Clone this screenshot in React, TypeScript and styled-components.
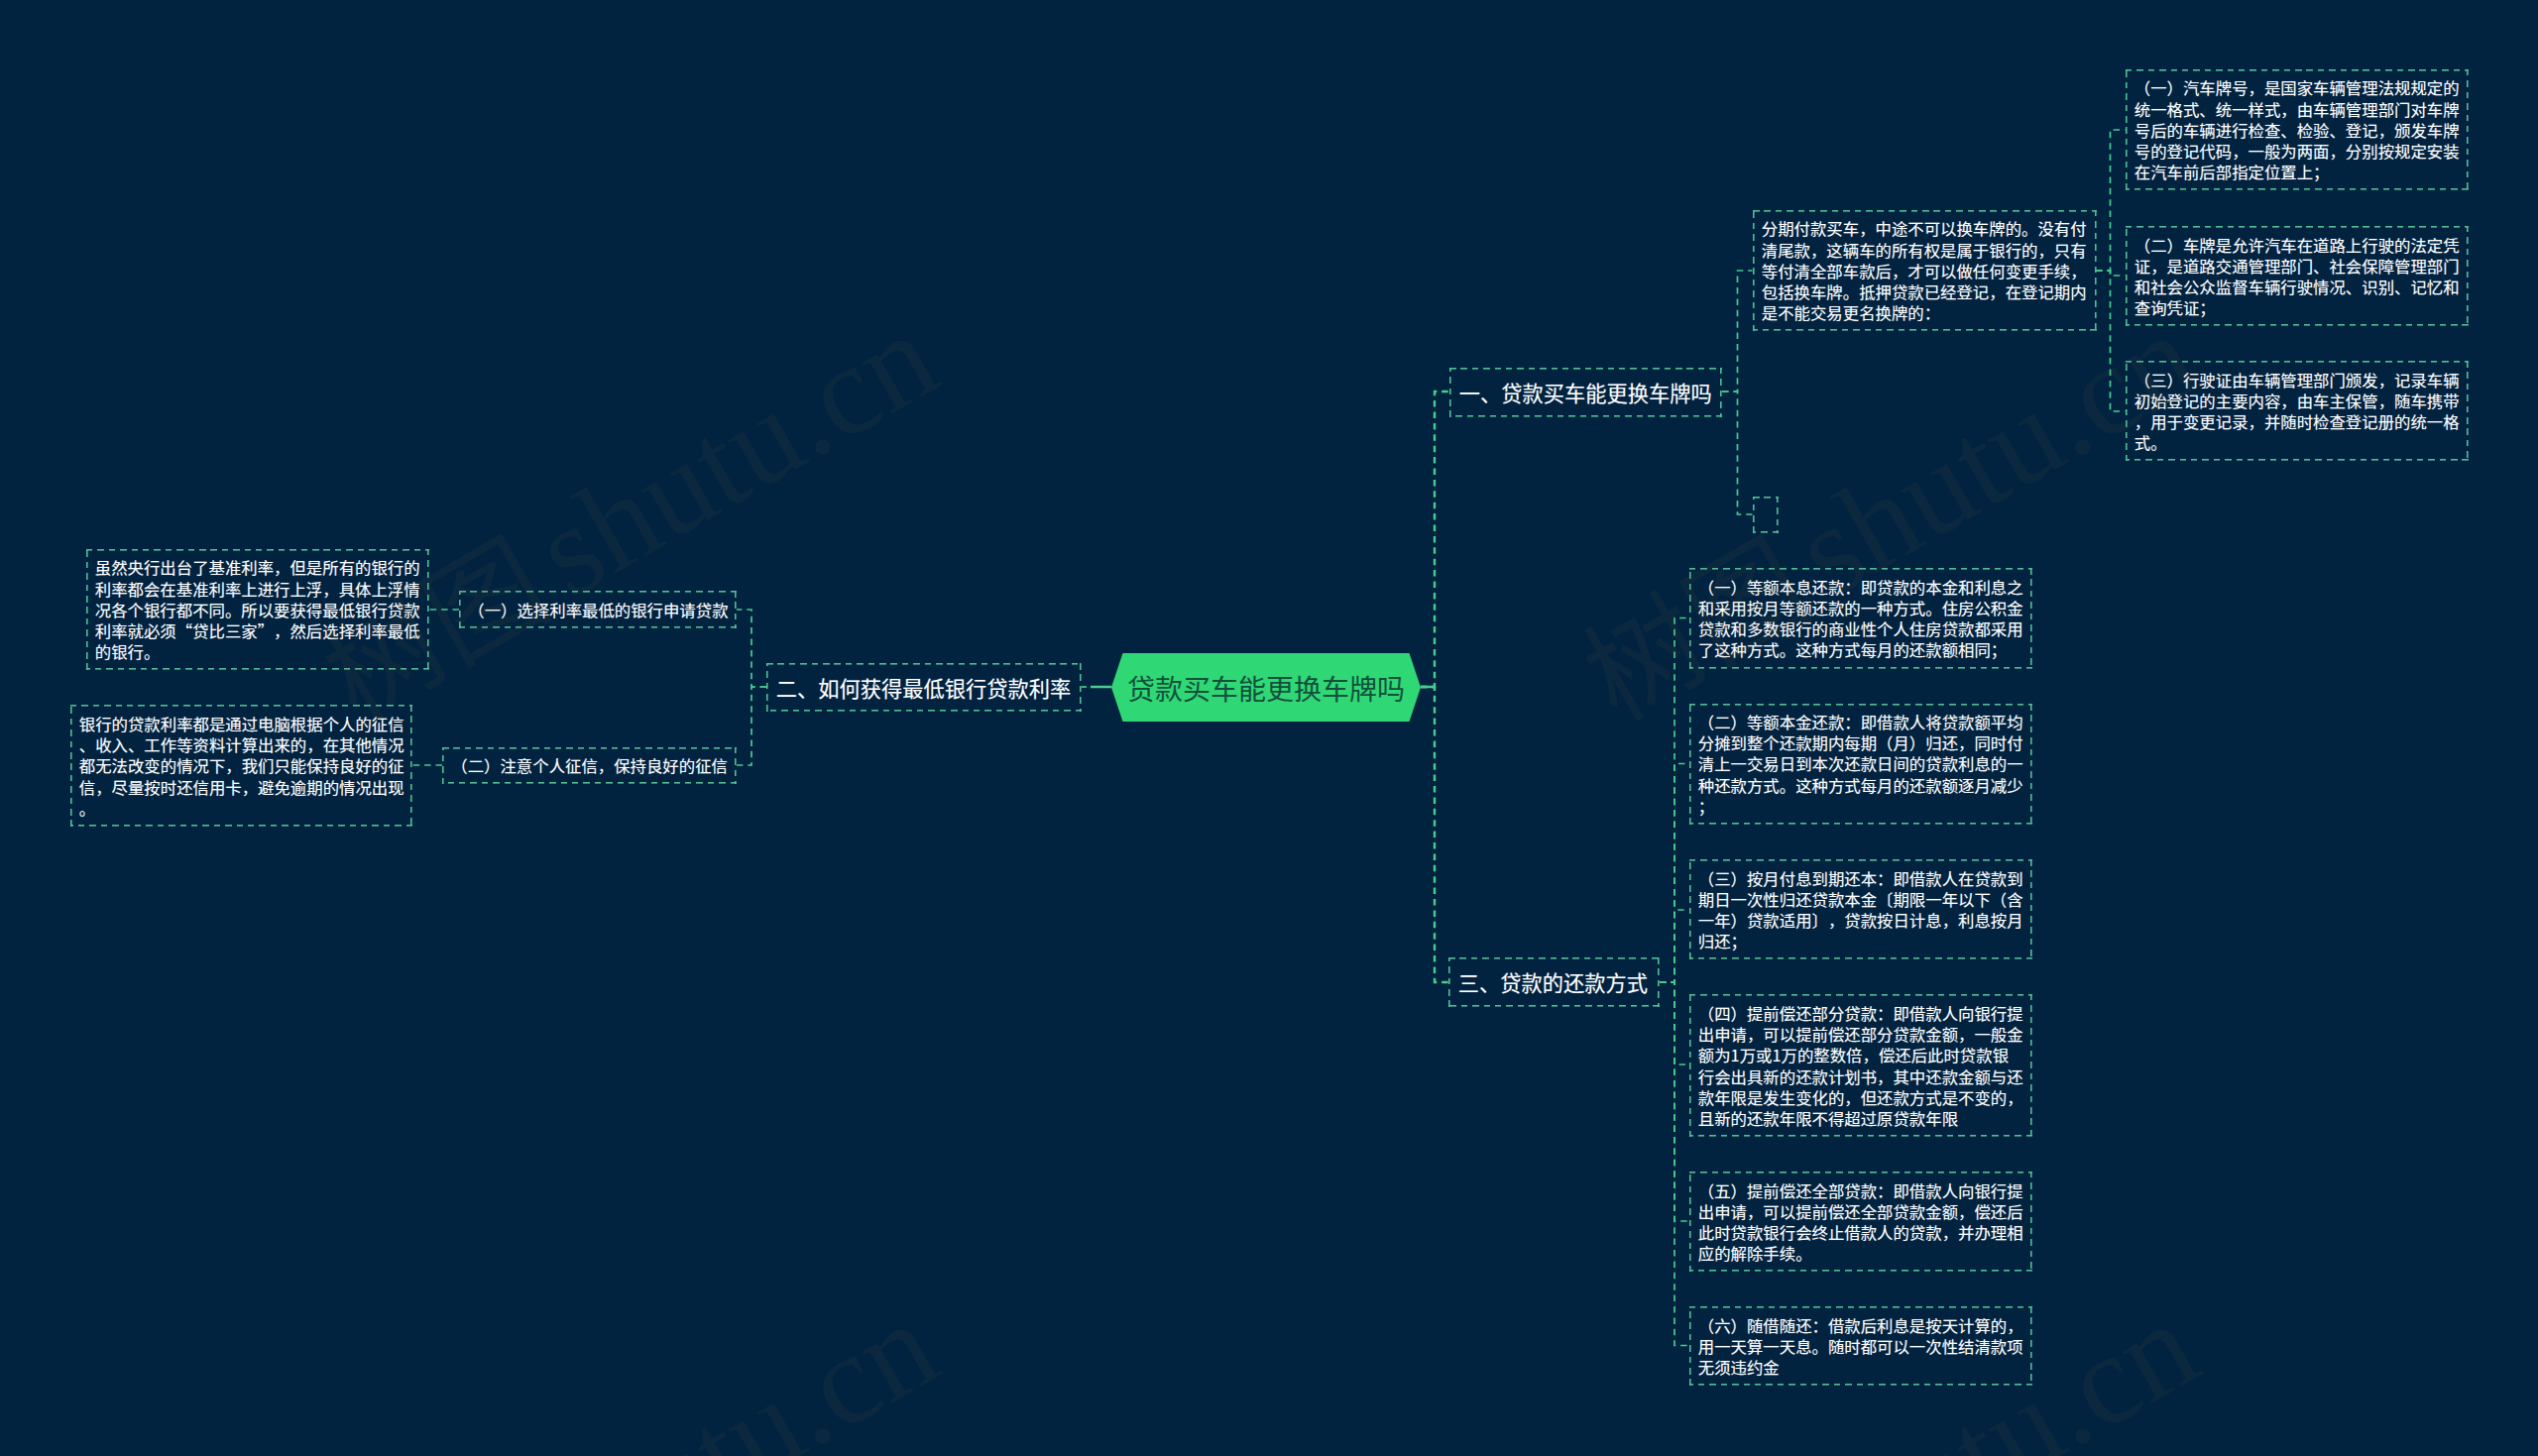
import React from 'react';
import styled, { createGlobalStyle } from 'styled-components';

const BORDER = '#52bd93';
const LINE = '#49cc8e';

const dash = (dir: string): string =>
  `repeating-linear-gradient(${dir}, ${BORDER} 0 6.5px, transparent 6.5px 11.4px)`;

const GlobalStyle = createGlobalStyle`
  html, body {
    margin: 0;
    padding: 0;
    background: #012340;
  }
`;

const Canvas = styled.div`
  position: relative;
  width: 2560px;
  height: 1469px;
  overflow: hidden;
  background: #012340;
  font-family: "Noto Sans CJK SC", "Noto Sans", sans-serif;
  color: #fff;
  text-spacing-trim: space-all;
`;

const Connectors = styled.svg`
  position: absolute;
  left: 0;
  top: 0;
`;

interface BoxProps {
  $x: number;
  $y: number;
  $w: number;
  $h: number;
}

const Root = styled.div<BoxProps>`
  position: absolute;
  left: ${p => p.$x}px;
  top: ${p => p.$y}px;
  width: ${p => p.$w}px;
  height: ${p => p.$h}px;
  display: flex;
  align-items: center;
  justify-content: center;
  background: #2fd875;
  clip-path: polygon(11.5px 0, calc(100% - 11.5px) 0, 100% 50%, calc(100% - 11.5px) 100%, 11.5px 100%, 0 50%);
  color: #11503c;
  font-size: 28px;
  line-height: 1;
  white-space: nowrap;
`;

const Node = styled.div<BoxProps & { $branch?: boolean }>`
  position: absolute;
  left: ${p => p.$x}px;
  top: ${p => p.$y}px;
  width: ${p => p.$w}px;
  height: ${p => p.$h}px;
  box-sizing: border-box;
  display: flex;
  align-items: center;
  padding: ${p => (p.$branch ? '0 9.8px' : '1px 9.3px 0')};
  font-size: ${p => (p.$branch ? 21.25 : 16.4)}px;
  line-height: 21.2px;
  white-space: pre;
  text-shadow: 0 0 1px rgba(255, 255, 255, 0.35);
  background:
    ${dash('90deg')} left top / 100% 1.6px no-repeat,
    ${dash('270deg')} left bottom / 100% 1.6px no-repeat,
    ${dash('180deg')} right top / 1.6px 100% no-repeat,
    ${dash('0deg')} left top / 1.6px 100% no-repeat;
`;

const Watermark = styled.span<{ $x: number; $y: number }>`
  position: absolute;
  left: ${p => p.$x}px;
  top: ${p => p.$y}px;
  font-family: "Liberation Serif", "Noto Sans CJK SC", serif;
  font-size: 130px;
  line-height: 1;
  word-spacing: -16px;
  white-space: pre;
  color: rgba(130, 110, 60, 0.085);
  transform: rotate(-30deg);
  transform-origin: 0 0;
  pointer-events: none;
`;

const WatermarkHan = styled.span`
  font-size: 116px;
`;

// x1 y1 -> bend x -> y2 -> x2
type Edge = [number, number, number, number, number];

const mainEdges: Edge[] = [
  [1433, 693, 1447, 395, 1462],
  [1433, 693, 1447, 991, 1461],
];

const edges: Edge[] = [
  [1737, 395, 1752.5, 273, 1767.5],
  [1737, 395, 1752.5, 519, 1767.5],
  [2114, 273, 2128.5, 131, 2143.5],
  [2114, 273, 2128.5, 278, 2143.5],
  [2114, 273, 2128.5, 415, 2143.5],
  [1674, 991, 1689, 623.5, 1703.5],
  [1674, 991, 1689, 770.5, 1703.5],
  [1674, 991, 1689, 918, 1703.5],
  [1674, 991, 1689, 1074, 1703.5],
  [1674, 991, 1689, 1232, 1703.5],
  [1674, 991, 1689, 1357.5, 1703.5],
  [773, 693, 758, 615, 743],
  [773, 693, 758, 772, 743],
  [463, 615, 448, 615, 432.5],
  [446, 772, 431, 772, 416],
];

interface MapNode {
  x: number;
  y: number;
  w: number;
  h: number;
  text: string;
  branch?: boolean;
}

const nodes: MapNode[] = [
  { x: 1462, y: 371, w: 275, h: 50, branch: true, text: '一、贷款买车能更换车牌吗' },
  { x: 773, y: 668.5, w: 318, h: 49.5, branch: true, text: '二、如何获得最低银行贷款利率' },
  { x: 1461, y: 966, w: 213, h: 50, branch: true, text: '三、贷款的还款方式' },
  {
    x: 1767.5, y: 212, w: 347, h: 122,
    text: '分期付款买车，中途不可以换车牌的。没有付\n清尾款，这辆车的所有权是属于银行的，只有\n等付清全部车款后，才可以做任何变更手续，\n包括换车牌。抵押贷款已经登记，在登记期内\n是不能交易更名换牌的：',
  },
  { x: 1767.5, y: 501, w: 26.5, h: 37, text: '' },
  {
    x: 2143.5, y: 70, w: 346, h: 122,
    text: '（一）汽车牌号，是国家车辆管理法规规定的\n统一格式、统一样式，由车辆管理部门对车牌\n号后的车辆进行检查、检验、登记，颁发车牌\n号的登记代码，一般为两面，分别按规定安装\n在汽车前后部指定位置上；',
  },
  {
    x: 2143.5, y: 228, w: 346, h: 101,
    text: '（二）车牌是允许汽车在道路上行驶的法定凭\n证，是道路交通管理部门、社会保障管理部门\n和社会公众监督车辆行驶情况、识别、记忆和\n查询凭证；',
  },
  {
    x: 2143.5, y: 364, w: 346, h: 101,
    text: '（三）行驶证由车辆管理部门颁发，记录车辆\n初始登记的主要内容，由车主保管，随车携带\n，用于变更记录，并随时检查登记册的统一格\n式。',
  },
  {
    x: 1703.5, y: 573, w: 346.5, h: 101.5,
    text: '（一）等额本息还款：即贷款的本金和利息之\n和采用按月等额还款的一种方式。住房公积金\n贷款和多数银行的商业性个人住房贷款都采用\n了这种方式。这种方式每月的还款额相同；',
  },
  {
    x: 1703.5, y: 709.5, w: 346.5, h: 122,
    text: '（二）等额本金还款：即借款人将贷款额平均\n分摊到整个还款期内每期（月）归还，同时付\n清上一交易日到本次还款日间的贷款利息的一\n种还款方式。这种方式每月的还款额逐月减少\n；',
  },
  {
    x: 1703.5, y: 867, w: 346.5, h: 101,
    text: '（三）按月付息到期还本：即借款人在贷款到\n期日一次性归还贷款本金〔期限一年以下（含\n一年）贷款适用〕，贷款按日计息，利息按月\n归还；',
  },
  {
    x: 1703.5, y: 1003, w: 346.5, h: 144,
    text: '（四）提前偿还部分贷款：即借款人向银行提\n出申请，可以提前偿还部分贷款金额，一般金\n额为1万或1万的整数倍，偿还后此时贷款银\n行会出具新的还款计划书，其中还款金额与还\n款年限是发生变化的，但还款方式是不变的，\n且新的还款年限不得超过原贷款年限',
  },
  {
    x: 1703.5, y: 1182, w: 346.5, h: 101,
    text: '（五）提前偿还全部贷款：即借款人向银行提\n出申请，可以提前偿还全部贷款金额，偿还后\n此时贷款银行会终止借款人的贷款，并办理相\n应的解除手续。',
  },
  {
    x: 1703.5, y: 1318, w: 346.5, h: 80,
    text: '（六）随借随还：借款后利息是按天计算的，\n用一天算一天息。随时都可以一次性结清款项\n无须违约金',
  },
  { x: 463, y: 596, w: 280, h: 38, text: '（一）选择利率最低的银行申请贷款' },
  { x: 446, y: 754, w: 297, h: 37, text: '（二）注意个人征信，保持良好的征信' },
  {
    x: 86.5, y: 554, w: 346, h: 122,
    text: '虽然央行出台了基准利率，但是所有的银行的\n利率都会在基准利率上进行上浮，具体上浮情\n况各个银行都不同。所以要获得最低银行贷款\n利率就必须“贷比三家”，然后选择利率最低\n的银行。',
  },
  {
    x: 70.5, y: 711, w: 345.5, h: 123,
    text: '银行的贷款利率都是通过电脑根据个人的征信\n、收入、工作等资料计算出来的，在其他情况\n都无法改变的情况下，我们只能保持良好的征\n信，尽量按时还信用卡，避免逾期的情况出现\n。',
  },
];

const marks: [number, number][] = [
  [305, 635],
  [1576, 635],
  [305, 1633],
  [1576, 1633],
];

const edgePath = ([x1, y1, bend, y2, x2]: Edge): string => `M${x1} ${y1}H${bend}V${y2}H${x2}`;

export default function App(): React.ReactElement {
  return (
    <Canvas lang="zh-CN">
      <GlobalStyle />
      <Connectors width={2560} height={1469} fill="none">
        {edges.map(e => (
          <path key={edgePath(e)} d={edgePath(e)} stroke={LINE} strokeWidth={1.7} strokeDasharray="6.5 4.9" />
        ))}
        {mainEdges.map(e => (
          <path key={edgePath(e)} d={edgePath(e)} stroke={LINE} strokeWidth={2.4} strokeDasharray="6.5 4.9" />
        ))}
        <path d="M1433 693H1447M1100 693H1121" stroke={LINE} strokeWidth={2.4} />
        <path d="M1091 693H1096" stroke={LINE} strokeWidth={1.7} />
      </Connectors>

      <Root $x={1121} $y={659} $w={312} $h={69}>贷款买车能更换车牌吗</Root>

      {nodes.map(n => (
        <Node key={`${n.x}-${n.y}`} $x={n.x} $y={n.y} $w={n.w} $h={n.h} $branch={n.branch}>
          {n.text}
        </Node>
      ))}

      {marks.map(([x, y]) => (
        <Watermark key={`${x}-${y}`} $x={x} $y={y}><WatermarkHan>树图</WatermarkHan> shutu.cn</Watermark>
      ))}
    </Canvas>
  );
}
